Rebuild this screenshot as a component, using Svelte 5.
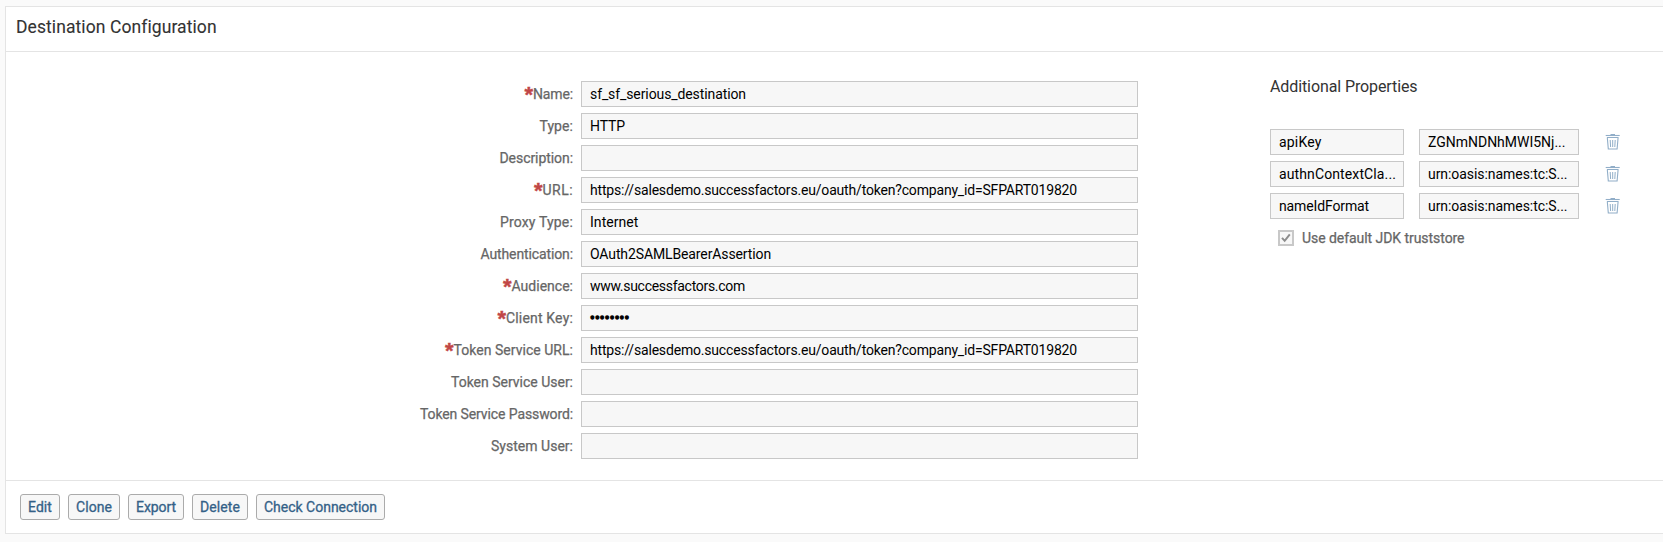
<script>
  const fields = [
    { label: 'Name:', lw: 40, required: true, value: 'sf_sf_serious_destination', vw: 156 },
    { label: 'Type:', lw: 33.5, value: 'HTTP', vw: 35 },
    { label: 'Description:', lw: 73.5, value: '' },
    { label: 'URL:', lw: 30.5, required: true, value: 'https://salesdemo.successfactors.eu/oauth/token?company_id=SFPART019820', vw: 487 },
    { label: 'Proxy Type:', lw: 73, value: 'Internet', vw: 48.5 },
    { label: 'Authentication:', lw: 92.5, value: 'OAuth2SAMLBearerAssertion', vw: 181 },
    { label: 'Audience:', lw: 61.5, required: true, value: 'www.successfactors.com', vw: 155 },
    { label: 'Client Key:', lw: 67, required: true, value: '••••••••', vw: 39.5, secret: true },
    { label: 'Token Service URL:', lw: 119.5, required: true, value: 'https://salesdemo.successfactors.eu/oauth/token?company_id=SFPART019820', vw: 487 },
    { label: 'Token Service User:', lw: 122, value: '' },
    { label: 'Token Service Password:', lw: 153, value: '' },
    { label: 'System User:', lw: 82, value: '' },
  ];

  const properties = [
    { key: 'apiKey', kw: 42.5, value: 'ZGNmNDNhMWI5Nj...', vw: 137.5 },
    { key: 'authnContextCla...', kw: 117, value: 'urn:oasis:names:tc:S...', vw: 139.5 },
    { key: 'nameIdFormat', kw: 90, value: 'urn:oasis:names:tc:S...', vw: 139.5 },
  ];

  const actions = [
    { text: 'Edit', w: 24 },
    { text: 'Clone', w: 36 },
    { text: 'Export', w: 40 },
    { text: 'Delete', w: 40 },
    { text: 'Check Connection', w: 113 },
  ];

  // Tracks the text so that it sets to the given width.
  function track(node, width) {
    if (!width) return;
    const natural = node.getBoundingClientRect().width;
    node.style.letterSpacing = (width - natural) / node.textContent.length + 'px';
  }
</script>

<section class="panel">
  <header><h1><span use:track={200}>Destination Configuration</span></h1></header>

  <div class="content">
    <div class="form">
      {#each fields as f}
        <div class="row">
          <label>{#if f.required}<b class="star">*</b>{/if}<span use:track={f.lw}>{f.label}</span></label>
          <div class="input" class:secret={f.secret}><span use:track={f.vw}>{f.value}</span></div>
        </div>
      {/each}
    </div>

    <aside>
      <h2><span use:track={147.5}>Additional Properties</span></h2>
      {#each properties as p}
        <div class="prop">
          <div class="input"><span use:track={p.kw}>{p.key}</span></div>
          <div class="input"><span use:track={p.vw}>{p.value}</span></div>
          <svg class="trash" width="16" height="18" viewBox="0 0 16 18" fill="none" stroke="#91aec8">
            <path d="M5.5 1.500h4.500" stroke-width="1" />
            <path d="M.7 2.500h14" stroke-width="1.1" />
            <path d="M2 4.500h11.500M2.300 4.500l1 11.500h8.800l1-11.500" stroke-width="1.1" />
            <path d="M5.200 7l.4 7M7.700 7v7M10.200 7l-.4 7" stroke-width="1" />
          </svg>
        </div>
      {/each}
      <div class="check">
        <span class="box">
          <svg width="10" height="10" viewBox="0 0 10 10" fill="none" stroke="#8c8c8c" stroke-width="2"><path d="M1 4.800l2.700 3L8.800 1.300" /></svg>
        </span>
        <span class="check-text"><span use:track={162.5}>Use default JDK truststore</span></span>
      </div>
    </aside>
  </div>

  <footer>
    {#each actions as a}
      <button><span use:track={a.w}>{a.text}</span></button>
    {/each}
  </footer>
</section>

<style>
  :global(body) {
    background: #fafafa;
    font-family: Roboto, 'Liberation Sans', sans-serif;
    font-size: 14px;
    overflow: hidden;
  }
  .panel {
    box-sizing: border-box;
    margin: 6px 0 0 5px;
    height: 528px;
    border: 1px solid #e4e4e4;
    border-right: 0;
    background: #fff;
    display: flex;
    flex-direction: column;
  }
  span { white-space: pre; }
  header {
    box-sizing: border-box;
    height: 45px;
    padding-left: 10px;
    border-bottom: 1px solid #e4e4e4;
  }
  h1, h2 { margin: 0; font-weight: 400; color: #333; }
  h1 { font-size: 17.5px; line-height: 40px; -webkit-text-stroke: 0.1px #333; }
  .content { flex: 1; display: flex; align-items: flex-start; padding-top: 29px; }
  .form { width: 1132px; display: flex; flex-direction: column; gap: 6px; }
  .row { display: flex; gap: 8px; height: 26px; }
  label {
    width: 567px;
    display: flex;
    justify-content: flex-end;
    color: #666;
    line-height: 26px;
    -webkit-text-stroke: 0.25px #666;
  }
  .star {
    color: #c14646;
    font: bold 22px/28px 'Liberation Sans', Arial, sans-serif;
    -webkit-text-stroke: 0.4px #c14646;
    height: 26px;
  }
  .input {
    box-sizing: border-box;
    height: 26px;
    padding-left: 8px;
    border: 1px solid #c8c8c8;
    background: #f7f7f7;
    color: #000;
    line-height: 24px;
    overflow: hidden;
  }
  .row .input { width: 557px; }
  .secret { -webkit-text-stroke: 1.3px #000; }
  aside { margin-left: 132px; }
  h2 { font-size: 16px; line-height: 20px; margin: -4px 0 32px; }
  .prop { display: flex; height: 26px; margin-bottom: 6px; }
  .prop .input { width: 134px; }
  .prop .input + .input { width: 160px; margin-left: 15px; }
  .trash { margin: 4px 0 0 26px; }
  .check { display: flex; align-items: center; height: 26px; padding-left: 8px; gap: 8px; }
  .box {
    box-sizing: border-box;
    width: 16px;
    height: 16px;
    border: 2px solid #c8c8c8;
    background: #f7f7f7;
    display: flex;
    align-items: center;
    justify-content: center;
  }
  .check-text { color: #666; -webkit-text-stroke: 0.25px #666; }
  footer {
    box-sizing: border-box;
    height: 53px;
    border-top: 1px solid #e4e4e4;
    padding: 13px 0 0 14px;
    display: flex;
    gap: 8px;
  }
  button {
    height: 26px;
    padding: 0 7px;
    border: 1px solid #ababab;
    border-radius: 3px;
    background: #f7f7f7;
    color: #346187;
    font: inherit;
    -webkit-text-stroke: 0.3px #346187;
  }
</style>
